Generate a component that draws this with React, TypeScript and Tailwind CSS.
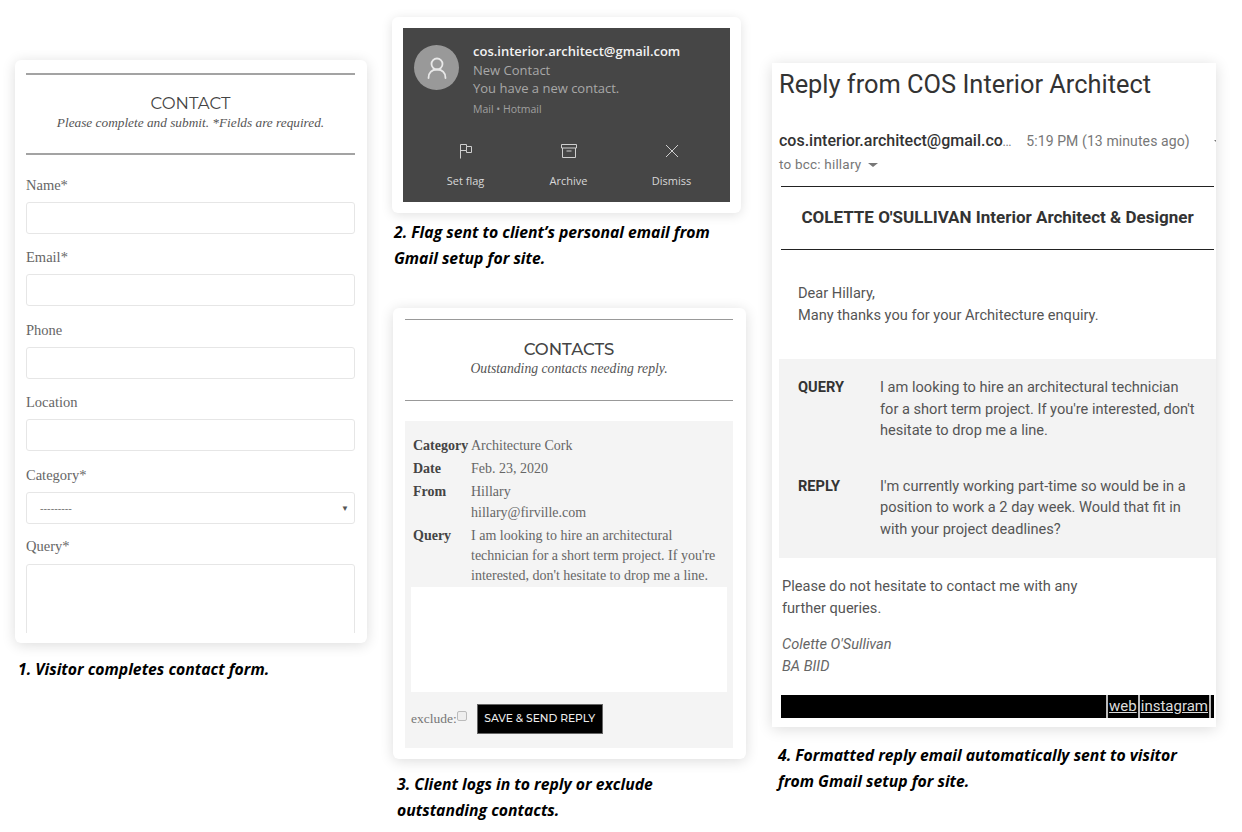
const serif = "font-['Liberation_Serif',serif]";
const caption = "font-['Open_Sans',sans-serif] font-bold italic text-[15.75px] leading-[26px] text-black";

const Field = ({ label, mt }: { label: string; mt: string }) => (
  <div className={mt}>
    <label className={`block text-[14.5px] leading-[18px] text-[#666] ${serif}`}>{label}</label>
    <div className="mt-[8px] h-[32px] rounded-[3px] border border-[#e6e6e6] bg-white" />
  </div>
);

const DetailRow = ({ name, children }: { name: string; children: React.ReactNode }) => (
  <div className="flex">
    <div className="w-[58px] shrink-0 font-bold text-[#444]">{name}</div>
    <div className="text-[#666]">{children}</div>
  </div>
);

const ContactForm = () => (
  <div className="h-[583px] w-[352px] rounded-[6px] bg-white pt-[13px] pr-[12px] pb-[10px] pl-[11px] shadow-[0_2px_14px_rgba(0,0,0,0.14)]">
    <div className="h-full overflow-hidden">
      <div className="h-[82px] border-y-2 border-[#a3a3a3] pt-[18px] text-center">
        <h2 className="font-['Montserrat','Open_Sans',sans-serif] text-[16.5px] leading-[20px] text-[#444]">CONTACT</h2>
        <p className={`text-[13.3px] leading-[20px] italic text-[#555] ${serif}`}>Please complete and submit. *Fields are required.</p>
      </div>
      <Field label="Name*" mt="mt-[21px]" />
      <Field label="Email*" mt="mt-[14px]" />
      <Field label="Phone" mt="mt-[15px]" />
      <Field label="Location" mt="mt-[14px]" />
      <div className="mt-[15px]">
        <label className={`block text-[14.5px] leading-[18px] text-[#666] ${serif}`}>Category*</label>
        <div className="mt-[8px] flex h-[32px] items-center justify-between rounded-[3px] border border-[#e6e6e6] bg-white pr-[5px] pl-[13px]">
          <span className="text-[11px] text-[#777]">---------</span>
          <span className="text-[8px] text-[#555]">▼</span>
        </div>
      </div>
      <div className="mt-[13px]">
        <label className={`block text-[14.5px] leading-[18px] text-[#666] ${serif}`}>Query*</label>
        <div className="mt-[9px] h-[120px] rounded-t-[3px] border border-[#e6e6e6] bg-white" />
      </div>
    </div>
  </div>
);

const Notification = () => (
  <div className="h-[196px] w-[349px] rounded-[6px] bg-white p-[11px] shadow-[0_2px_12px_rgba(0,0,0,0.12)]">
    <div className="h-[174px] w-[327px] bg-[#464646] font-['Open_Sans',sans-serif]">
      <div className="flex pt-[17px] pl-[11px]">
        <div className="flex h-[45px] w-[45px] items-center justify-center rounded-full bg-[#999]">
          <svg width="24" height="24" viewBox="0 0 24 24" fill="none" stroke="#e8e8e8" strokeWidth="1.8" strokeLinecap="round">
            <circle cx="12" cy="8" r="5.5" />
            <path d="M3.5 22c0-5.5 3.5-8.5 8.5-8.5s8.5 3 8.5 8.5" />
          </svg>
        </div>
        <div className="ml-[14px] -mt-[3px]">
          <div className="text-[13px] leading-[18.5px] font-semibold text-[#f2f2f2]">cos.interior.architect@gmail.com</div>
          <div className="text-[13px] leading-[18.5px] text-[#a8a8a8]">New Contact</div>
          <div className="text-[13px] leading-[18.5px] text-[#a8a8a8]">You have a new contact.</div>
          <div className="mt-[2px] text-[10.5px] leading-[19px] text-[#a0a0a0]">Mail • Hotmail</div>
        </div>
      </div>
      <div className="mt-[24px] grid grid-cols-3 pr-[7px] pl-[11px] text-[11px] text-[#d8d8d8]">
        <div className="flex flex-col items-center gap-[14px]">
          <svg width="16" height="16" viewBox="0 0 16 16" fill="none" stroke="#cfcfcf" strokeWidth="1">
            <path d="M2.5 15.5V1.5h6v2h5v6h-5v-2h-6M8.5 3.5v4" />
          </svg>
          <span className="leading-[16px]">Set flag</span>
        </div>
        <div className="flex flex-col items-center gap-[14px]">
          <svg width="16" height="16" viewBox="0 0 16 16" fill="none" stroke="#cfcfcf" strokeWidth="1">
            <path d="M.5 1.5h15V5H.5zM1.5 5v9.500h13V5M5.5 8h5" />
          </svg>
          <span className="leading-[16px]">Archive</span>
        </div>
        <div className="flex flex-col items-center gap-[14px]">
          <svg width="16" height="16" viewBox="0 0 16 16" fill="none" stroke="#cfcfcf" strokeWidth="1">
            <path d="M2 2l12 12M14 2L2 14" />
          </svg>
          <span className="leading-[16px]">Dismiss</span>
        </div>
      </div>
    </div>
  </div>
);

const ReplyForm = () => (
  <div className="h-[451px] w-[353px] rounded-[6px] bg-white pt-[11px] pr-[13px] pl-[12px] shadow-[0_2px_14px_rgba(0,0,0,0.14)]">
    <div className="h-[82px] border-y border-[#999] pt-[19px] text-center">
      <h2 className="font-['Montserrat','Open_Sans',sans-serif] text-[16.5px] leading-[20px] font-medium text-[#444]">CONTACTS</h2>
      <p className={`text-[13.7px] leading-[20px] italic text-[#555] ${serif}`}>Outstanding contacts needing reply.</p>
    </div>
    <div className={`mt-[20px] h-[327px] bg-[#f4f4f4] px-[7px] pt-[14px] ${serif}`}>
      <div className="px-[1px] text-[14px] leading-[21px]">
        <DetailRow name="Category">Architecture Cork</DetailRow>
        <div className="mt-[2px]">
          <DetailRow name="Date">Feb. 23, 2020</DetailRow>
        </div>
        <div className="mt-[2px]">
          <DetailRow name="From">Hillary<br />hillary@firville.com</DetailRow>
        </div>
        <div className="mt-[3px] leading-[20px]">
          <DetailRow name="Query">
            I am looking to hire an architectural<br />technician for a short term project. If you're<br />interested, don't hesitate to drop me a line.
          </DetailRow>
        </div>
      </div>
      <div className="mt-[1px] mr-[-1px] ml-[-1px] h-[105px] bg-white" />
      <div className="mt-[12px] ml-[-1px] flex items-center">
        <span className="text-[13.5px] text-[#777]">exclude:</span>
        <span className="mb-[6px] h-[10px] w-[10px] rounded-[2px] border border-[#bbb] bg-[#eee]" />
        <button className="ml-[10px] flex h-[30px] w-[126px] items-center justify-center border border-[#666] bg-black font-['Montserrat','Open_Sans',sans-serif] text-[10.7px] font-medium text-[#eee]">
          SAVE &amp; SEND REPLY
        </button>
      </div>
    </div>
  </div>
);

const ReplyEmail = () => (
  <div className="h-[664px] w-[444px] bg-white font-['Roboto',sans-serif] shadow-[0_2px_14px_rgba(0,0,0,0.14)]">
    <h1 className="pt-[4px] pl-[7px] text-[25.4px] leading-[34px] text-[#333]">Reply from COS Interior Architect</h1>
    <div className="mt-[29px] flex items-center overflow-hidden pl-[7px] leading-[21px]">
      <span className="shrink-0 text-[16px] font-medium text-[#333]">cos.interior.architect@gmail.co<span className="text-[10px] text-[#777]">...</span></span>
      <span className="ml-[15px] shrink-0 text-[14px] tracking-[0.1px] text-[#777]">5:19 PM (13 minutes ago)</span>
      <span className="ml-[24px] h-0 w-0 shrink-0 border-x-[4px] border-t-[4px] border-x-transparent border-t-[#777]" />
    </div>
    <div className="flex items-center pl-[7px] text-[13.5px] leading-[22px] tracking-[0.2px] text-[#777]">
      to bcc: hillary
      <span className="mt-[2px] ml-[7px] h-0 w-0 border-x-[5px] border-t-[4px] border-x-transparent border-t-[#777]" />
    </div>
    <div className="mt-[11px] mr-[2px] ml-[9px] h-[64px] border-y border-[#222] text-center text-[17px] leading-[60px] font-bold text-[#333]">
      COLETTE O'SULLIVAN Interior Architect &amp; Designer
    </div>
    <div className="mt-[33px] pl-[26px] text-[14.6px] leading-[21.5px] text-[#555]">
      Dear Hillary,<br />Many thanks you for your Architecture enquiry.
    </div>
    <div className="mt-[33px] ml-[7px] h-[199px] bg-[#f3f3f3] pt-[18px] pl-[19px] text-[14.6px] leading-[21.5px] text-[#555]">
      <div className="flex">
        <div className="w-[82px] shrink-0 font-bold text-[#333]">QUERY</div>
        <div>I am looking to hire an architectural technician<br />for a short term project. If you're interested, don't<br />hesitate to drop me a line.</div>
      </div>
      <div className="mt-[34px] flex">
        <div className="w-[82px] shrink-0 font-bold text-[#333]">REPLY</div>
        <div>I'm currently working part-time so would be in a<br />position to work a 2 day week. Would that fit in<br />with your project deadlines?</div>
      </div>
    </div>
    <div className="mt-[18px] pl-[10px] text-[14.6px] leading-[21.5px] text-[#555]">
      Please do not hesitate to contact me with any<br />further queries.
    </div>
    <div className="mt-[15px] pl-[10px] text-[14.6px] leading-[21.5px] text-[#666] italic">
      Colette O'Sullivan<br />BA BIID
    </div>
    <div className="mt-[18px] mr-[2px] ml-[9px] flex h-[23px] justify-end bg-black pr-[3px] text-[15px] leading-[23px] text-[#ddd]">
      <a className="border-l-2 border-[#bbb] pl-[1px] underline">web</a>
      <a className="ml-[1px] border-x-2 border-[#bbb] px-[1px] underline">instagram</a>
    </div>
  </div>
);

export default function App() {
  return (
    <div className="flex h-[832px] w-[1242px] overflow-hidden bg-white">
      <div className="ml-[15px] pt-[60px]">
        <ContactForm />
        <p className={`mt-[13px] ml-[3px] ${caption}`}>1. Visitor completes contact form.</p>
      </div>
      <div className="ml-[25px] pt-[17px]">
        <Notification />
        <p className={`mt-[6px] ml-[2px] ${caption}`}>2. Flag sent to client’s personal email from<br />Gmail setup for site.</p>
        <div className="mt-[37px] ml-[1px]">
          <ReplyForm />
        </div>
        <p className={`mt-[12px] ml-[5px] ${caption}`}>3. Client logs in to reply or exclude<br />outstanding contacts.</p>
      </div>
      <div className="ml-[26px] pt-[63px]">
        <ReplyEmail />
        <p className={`mt-[15px] ml-[6px] ${caption}`}>4. Formatted reply email automatically sent to visitor<br />from Gmail setup for site.</p>
      </div>
    </div>
  );
}
